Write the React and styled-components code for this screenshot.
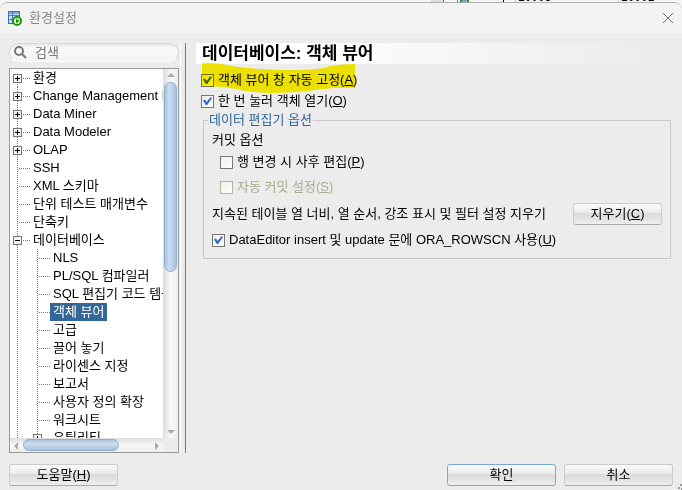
import React, { useState } from 'react'
import styled, { createGlobalStyle } from 'styled-components'

const GlobalStyle = createGlobalStyle`
  * {
    box-sizing: border-box;
  }

  body {
    margin: 0;
    background: #f5f5f5;
    color: #000;
    font-family: "Liberation Sans", "Noto Sans CJK KR", sans-serif;
    font-size: 13px;
    line-height: 18px;
  }

  button, input {
    font: inherit;
    color: inherit;
  }
`

const Screen = styled.div`
  display: flex;
  flex-direction: column;
  height: 100vh;
  overflow: hidden;
`

const BackdropStrip = styled.div`
  display: flex;
  justify-content: flex-end;
  align-items: flex-end;
  height: 2px;
  padding-right: 30px;
  overflow: hidden;
  font-size: 12px;
  line-height: 9px;
`

const BackdropCell = styled.span`
  width: 103px;
  padding-left: 2px;
  border-left: 1px solid #d0d0d0;

  &:last-child {
    width: 34px;
  }
`

const BackdropMarks = styled.svg`
  width: 96px;
  height: 2px;
  margin-right: 8px;
`

const Dialog = styled.div`
  position: relative;
  flex: 1;
  min-height: 0;
  display: flex;
  flex-direction: column;
  background: #ececec;
  border-top: 1px solid #b0b0b0;
  border-radius: 8px 8px 0 0;
  overflow: hidden;
`

const TitleBar = styled.header`
  display: flex;
  align-items: center;
  gap: 7px;
  height: 30px;
  padding: 0 8px 0 7px;
  background: #f3f3f3;
  color: #888;
`

const TitleText = styled.span`
  flex: 1;
`

const CloseButton = styled.button`
  display: flex;
  padding: 0;
  border: 0;
  background: none;
`

const Body = styled.div`
  flex: 1;
  min-height: 0;
  display: flex;
  padding: 10px 0 0 9px;
`

const Sidebar = styled.aside`
  flex: none;
  width: 170px;
  display: flex;
  flex-direction: column;
  gap: 6px;
`

const SearchBox = styled.label`
  display: flex;
  align-items: center;
  gap: 8px;
  height: 19px;
  padding: 0 4px;
  border: 1px solid #d8d8d8;
  border-radius: 10px;
  background: linear-gradient(#e8e8e8, #fafafa 4px, #f4f4f4);
  border-bottom-color: #fff;
`

const SearchInput = styled.input`
  flex: 1;
  min-width: 0;
  padding: 0;
  border: 0;
  outline: 0;
  background: none;

  &::placeholder {
    color: #777;
    opacity: 1;
  }
`

const TreeFrame = styled.div`
  flex: 1;
  min-height: 0;
  display: grid;
  grid-template-columns: minmax(0, 1fr) 15px;
  grid-template-rows: minmax(0, 1fr) 14px;
  border: 1px solid #999;
  background: #fff;
`

const TreeView = styled.div`
  overflow: hidden;
  padding-left: 3px;
`

const TreeList = styled.ul`
  margin: 0;
  padding: 0;
  list-style: none;
`

const TreeItem = styled.li`
  display: flex;
  align-items: center;
  height: 18px;
  white-space: nowrap;
`

const Guides = styled.svg`
  flex: none;
  width: ${({ $depth }) => ($depth ? 37 : 17)}px;
  height: 18px;
`

const TreeLabel = styled.span`
  height: 18px;
  padding: 0 3px;
  background: ${({ $selected }) => ($selected ? '#336699' : 'transparent')};
  color: ${({ $selected }) => ($selected ? '#fff' : '#000')};
`

const ScrollBar = styled.div`
  display: flex;
  flex-direction: ${({ $horizontal }) => ($horizontal ? 'row' : 'column')};
  align-items: center;
  background: linear-gradient(${({ $horizontal }) => ($horizontal ? '180deg' : '90deg')}, #dcdcdc, #f8f8f8 50%, #eee);
`

const Arrow = styled.svg`
  flex: none;
  width: 11px;
  height: 11px;
  margin: ${({ $horizontal }) => ($horizontal ? '0 1px' : '1px 0')};
  fill: #aaa;
`

const Thumb = styled.div`
  flex: ${({ $size }) => $size};
  align-self: stretch;
  margin: ${({ $horizontal }) => ($horizontal ? '1px 0' : '0 1px')};
  border: 1px solid #90afd0;
  border-radius: 7px;
  background: linear-gradient(${({ $horizontal }) => ($horizontal ? '180deg' : '90deg')}, #a8c2de, #d0e0f0 40%, #bed3e8 60%, #a8c2de);
`

const Track = styled.div`
  flex: ${({ $size }) => $size};
`

const Corner = styled.div`
  background: #ececec;
`

const Divider = styled.div`
  flex: none;
  width: 7px;
  margin-right: 10px;
  border-right: 1px solid #777;
  background: linear-gradient(90deg, #ececec 1px, #fff 1px, #fff 2px, #ececec 2px);
`

const Content = styled.main`
  flex: 1;
  min-width: 0;
  padding-right: 11px;
`

const PageTitle = styled.h1`
  margin: 0 0 7px;
  padding-left: 6px;
  background: linear-gradient(90deg, #fff 20%, #ececec 95%);
  font-size: 17px;
  font-weight: 700;
  line-height: 21px;
`

const Options = styled.div`
  position: relative;
  display: flex;
  flex-direction: column;
  gap: 3px;
  padding-left: 5px;
`

const Marker = styled.svg`
  position: absolute;
  left: 6px;
  top: -9px;
  width: 154px;
  height: 32px;
  mix-blend-mode: multiply;
  pointer-events: none;
`

const CheckLabel = styled.label`
  display: flex;
  align-items: center;
  gap: 4px;
  height: 18px;
  color: ${({ $disabled }) => ($disabled ? '#aaaa8c' : '#000')};
  white-space: nowrap;
`

const CheckBox = styled.input`
  appearance: none;
  flex: none;
  display: grid;
  place-items: center;
  width: 13px;
  height: 13px;
  margin: 0;
  border: 1px solid #777;
  background: linear-gradient(135deg, #eee, #fff);

  &:disabled {
    border-color: #b4b496;
  }

  &:checked::before {
    content: '';
    width: 9px;
    height: 9px;
    background: #2f69c4;
    clip-path: polygon(0 44%, 22% 33%, 40% 60%, 82% 8%, 100% 18%, 46% 95%, 32% 95%);
  }
`

const Group = styled.fieldset`
  min-width: 0;
  margin: 1px 0 0 7px;
  padding: 2px 8px 9px;
  border: 1px solid #c8c8c8;
`

const GroupTitle = styled.legend`
  margin-left: -4px;
  padding: 0 1px;
  color: #336699;
`

const Indented = styled.div`
  display: flex;
  flex-direction: column;
  gap: 7px;
  padding: 4px 0 7px 8px;
`

const ClearRow = styled.div`
  display: flex;
  align-items: center;
  justify-content: space-between;
  padding-bottom: 6px;
  white-space: nowrap;
`

const Button = styled.button`
  width: ${({ $small }) => ($small ? 89 : 109)}px;
  height: 22px;
  padding: 0;
  border: 1px solid ${({ $primary }) => ($primary ? '#78a8dc' : '#ccc')};
  border-bottom-color: ${({ $primary }) => ($primary ? '#78a8dc' : '#aaa')};
  border-radius: 3px;
  background: linear-gradient(#fafafa, #ececec 42%, #dadada 46%, #e8e8e8 85%, #f0f0f0);
  line-height: 18px;
`

const Footer = styled.footer`
  display: flex;
  gap: 8px;
  padding: 11px 9px 4px;
`

const Spacer = styled.div`
  flex: 1;
`

const Grip = styled.svg`
  position: absolute;
  right: 0;
  bottom: 0;
  width: 6px;
  height: 6px;
  fill: #999;
`

const treeData = [
  { label: '환경', box: 'plus' },
  { label: 'Change Management Database', box: 'plus' },
  { label: 'Data Miner', box: 'plus' },
  { label: 'Data Modeler', box: 'plus' },
  { label: 'OLAP', box: 'plus' },
  { label: 'SSH' },
  { label: 'XML 스키마' },
  { label: '단위 테스트 매개변수' },
  { label: '단축키' },
  { label: '데이터베이스', box: 'minus' },
  { label: 'NLS', depth: 1 },
  { label: 'PL/SQL 컴파일러', depth: 1 },
  { label: 'SQL 편집기 코드 템플리트', depth: 1 },
  { label: '객체 뷰어', depth: 1 },
  { label: '고급', depth: 1 },
  { label: '끌어 놓기', depth: 1 },
  { label: '라이센스 지정', depth: 1 },
  { label: '보고서', depth: 1 },
  { label: '사용자 정의 확장', depth: 1 },
  { label: '워크시트', depth: 1 },
  { label: '유틸리티', depth: 1, box: 'plus' }
]

function TreeGuides({ depth = 0, box, first }) {
  const x = depth ? 24 : 4
  return (
    <Guides $depth={depth} shapeRendering="crispEdges" aria-hidden="true">
      <g stroke="#777" strokeDasharray="1 1">
        <path d={`M4.5 ${first ? 9 : 0}V18`} />
        {depth > 0 && <path d="M24.5 0V18" />}
        <path d={`M${x + 2} 9.5H${x + 13}`} />
      </g>
      {box && (
        <>
          <rect x={x - 3.5} y="5.5" width="8" height="8" fill="#f4f4ee" stroke="#777" />
          <path d={`M${x - 2} 9.5h5`} stroke="#000" />
          {box === 'plus' && <path d={`M${x + 0.5} 7v5`} stroke="#000" />}
        </>
      )}
    </Guides>
  )
}

function Check({ defaultChecked, disabled, children }) {
  return (
    <CheckLabel $disabled={disabled}>
      <CheckBox type="checkbox" defaultChecked={defaultChecked} disabled={disabled} />
      <span>{children}</span>
    </CheckLabel>
  )
}

function AppIcon() {
  return (
    <svg width="15" height="16" viewBox="0 0 15 16" aria-hidden="true">
      <rect x="1.500" y="1.500" width="11" height="12" fill="#c9dcf5" stroke="#3f6fc0" />
      <rect x="2" y="2" width="10" height="2" fill="#7fa6e0" />
      <path d="M5.500 2v11M2 5.500h10M2 9.500h10" stroke="#4b7bc8" fill="none" />
      <circle cx="10" cy="11" r="4" fill="#fff" stroke="#159a00" strokeWidth="2" />
      <path d="M9 8.500l3.500 2.500L9 13.500z" fill="#159a00" />
    </svg>
  )
}

export default function App() {
  const [query, setQuery] = useState('')
  const [selected, setSelected] = useState('객체 뷰어')

  return (
    <>
      <GlobalStyle />
      <Screen>
        <BackdropStrip aria-hidden="true">
          <BackdropMarks>
            <rect x="20" width="12" height="2" fill="#ddd" />
            <rect x="32" width="1" height="2" fill="#777" />
            <rect x="46" width="1" height="2" fill="#777" />
            <rect x="49" width="9" height="2" fill="#10a810" />
            <rect x="51" width="5" height="2" fill="#7a9fc8" />
            <rect x="92" width="1" height="2" fill="#000" />
          </BackdropMarks>
          <BackdropCell>10005</BackdropCell>
          <BackdropCell>10001</BackdropCell>
        </BackdropStrip>
        <Dialog>
          <TitleBar>
            <AppIcon />
            <TitleText>환경설정</TitleText>
            <CloseButton aria-label="닫기">
              <svg width="12" height="12" stroke="#777" fill="none">
                <path d="M1 1l10 10M11 1L1 11" />
              </svg>
            </CloseButton>
          </TitleBar>

          <Body>
            <Sidebar>
              <SearchBox>
                <svg width="13" height="13" stroke="#777" strokeWidth="2" fill="none" aria-hidden="true">
                  <circle cx="5" cy="5" r="4" />
                  <path d="M8 8l4 4" />
                </svg>
                <SearchInput
                  aria-label="검색"
                  placeholder="검색"
                  value={query}
                  onChange={(e) => setQuery(e.target.value)}
                />
              </SearchBox>
              <TreeFrame>
                <TreeView>
                  <TreeList>
                    {treeData.map((node, i) => (
                      <TreeItem key={node.label} onClick={() => setSelected(node.label)}>
                        <TreeGuides depth={node.depth} box={node.box} first={i === 0} />
                        <TreeLabel $selected={selected === node.label}>{node.label}</TreeLabel>
                      </TreeItem>
                    ))}
                  </TreeList>
                </TreeView>
                <ScrollBar>
                  <Arrow viewBox="0 0 11 11"><path d="M2 7h8L6 3z" /></Arrow>
                  <Thumb $size={190} />
                  <Track $size={154} />
                  <Arrow viewBox="0 0 11 11"><path d="M2 4h8L6 8z" /></Arrow>
                </ScrollBar>
                <ScrollBar $horizontal>
                  <Arrow $horizontal viewBox="0 0 11 11"><path d="M7 2v8L3 6z" /></Arrow>
                  <Thumb $horizontal $size={96} />
                  <Track $size={32} />
                  <Arrow $horizontal viewBox="0 0 11 11"><path d="M4 2v8l4-4z" /></Arrow>
                </ScrollBar>
                <Corner />
              </TreeFrame>
            </Sidebar>
            <Divider />

            <Content>
              <PageTitle>데이터베이스: 객체 뷰어</PageTitle>
              <Options>
                <Check defaultChecked>객체 뷰어 창 자동 고정(<u>A</u>)</Check>
                <Check defaultChecked>한 번 눌러 객체 열기(<u>O</u>)</Check>
                <Marker aria-hidden="true">
                  <path
                    d="M0 1Q12 0 25 3Q50 8 88 8Q120 8 128 4Q140 2 153 2V26Q140 25 120 27Q95 31 66 31Q45 30 35 27Q18 24 0 24Z"
                    fill="#fff200"
                  />
                </Marker>
              </Options>
              <Group>
                <GroupTitle>데이터 편집기 옵션</GroupTitle>
                <div>커밋 옵션</div>
                <Indented>
                  <Check>행 변경 시 사후 편집(<u>P</u>)</Check>
                  <Check disabled>자동 커밋 설정(<u>S</u>)</Check>
                </Indented>
                <ClearRow>
                  <span>지속된 테이블 열 너비, 열 순서, 강조 표시 및 필터 설정 지우기</span>
                  <Button $small>지우기(<u>C</u>)</Button>
                </ClearRow>
                <Check defaultChecked>DataEditor insert 및 update 문에 ORA_ROWSCN 사용(<u>U</u>)</Check>
              </Group>
            </Content>
          </Body>

          <Footer>
            <Button>도움말(<u>H</u>)</Button>
            <Spacer />
            <Button $primary>확인</Button>
            <Button>취소</Button>
          </Footer>
          <Grip aria-hidden="true">
            <path d="M4 0h2v2h-2zM2 3h2v2h-2zM5 4h1v2h-1z" />
          </Grip>
        </Dialog>
      </Screen>
    </>
  )
}
